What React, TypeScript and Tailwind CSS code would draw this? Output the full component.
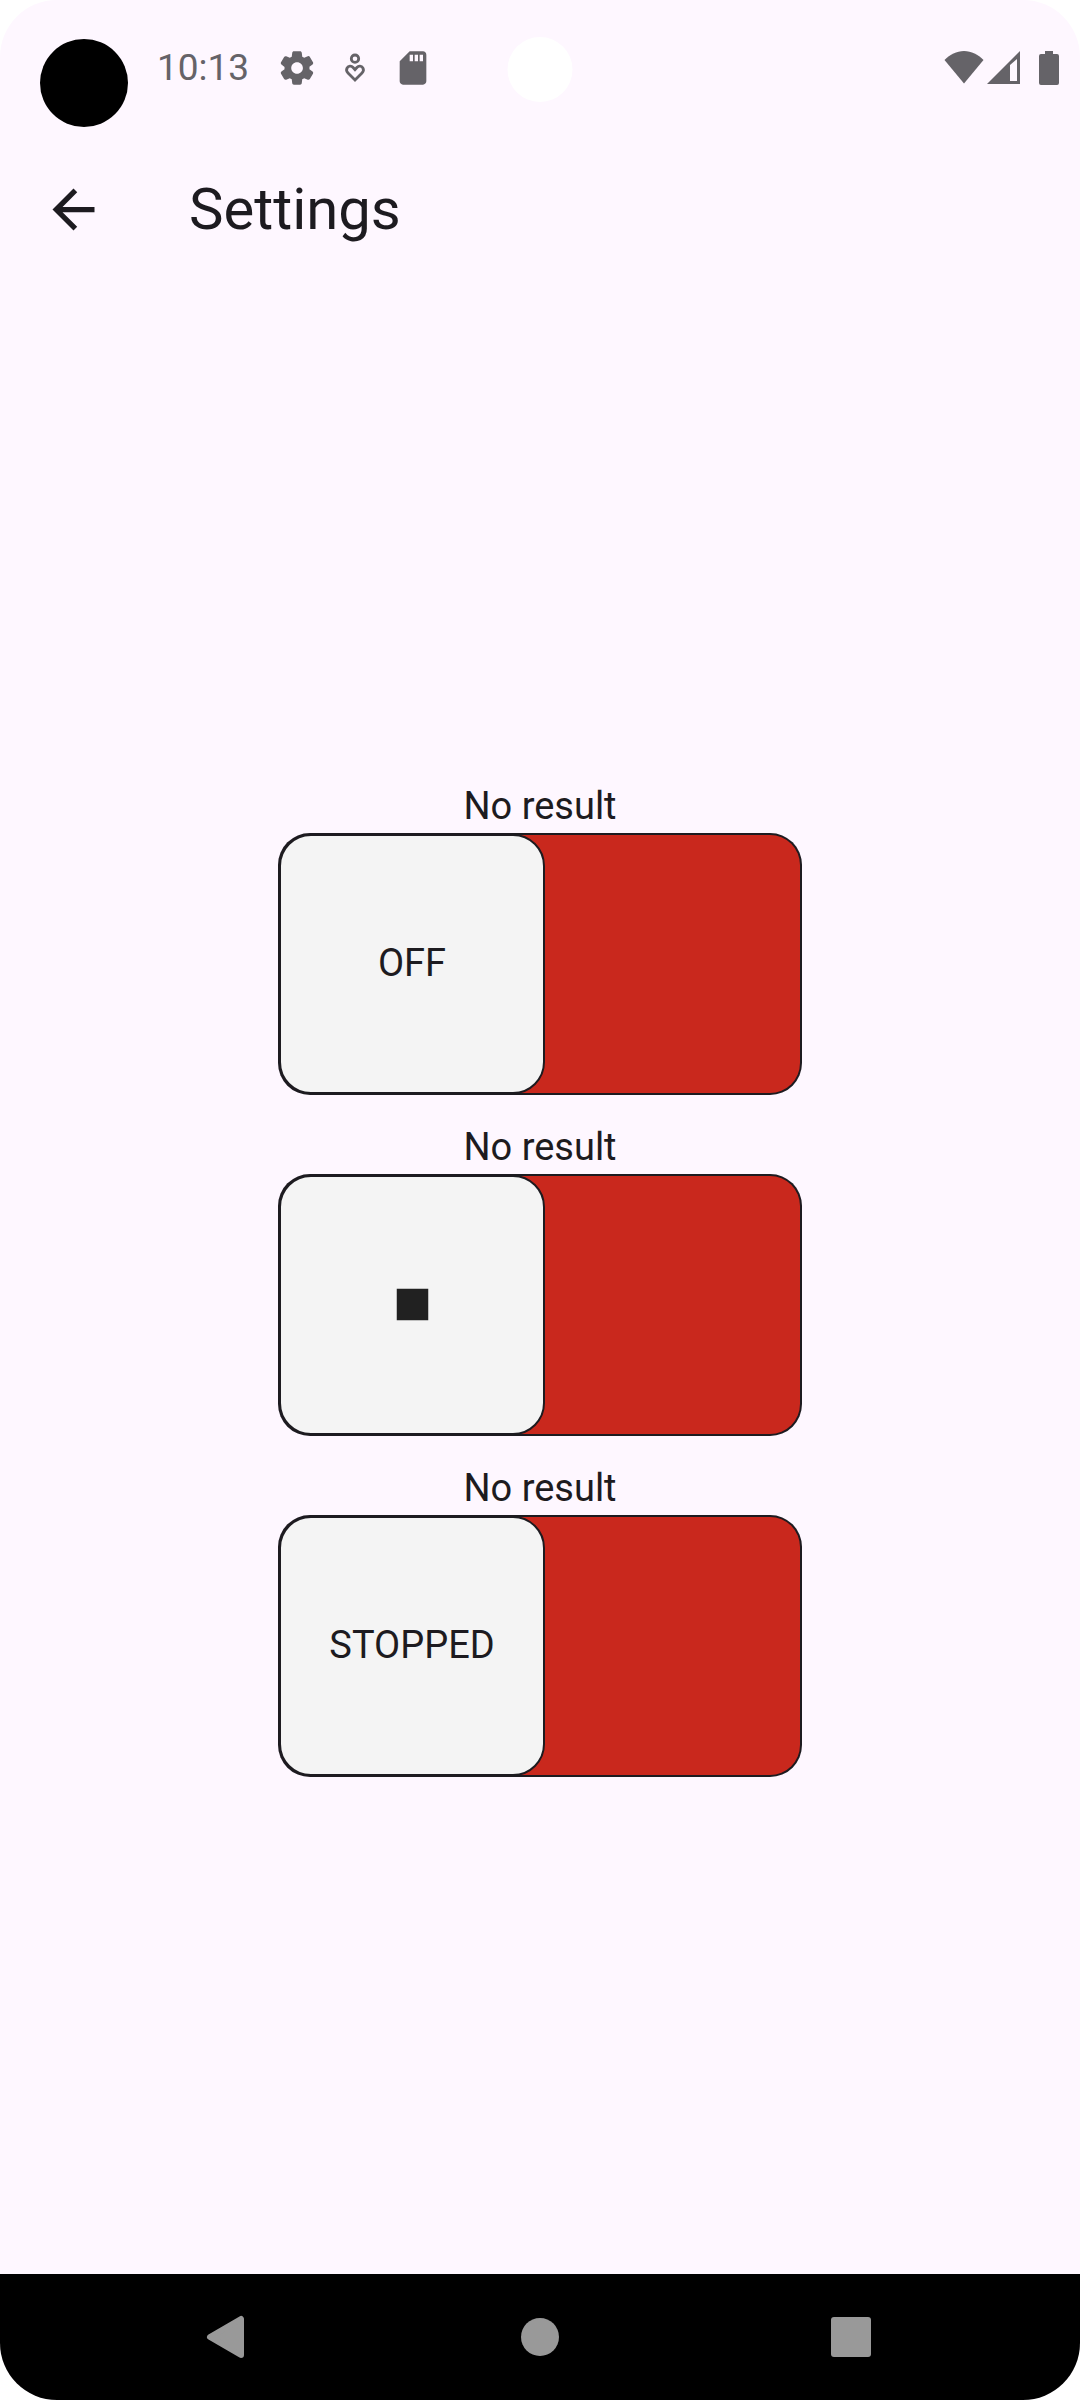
import { useId, type ReactNode } from "react";

function StatusBar() {
  return (
    <div className="relative flex h-[136px] shrink-0 items-center pr-[15px] pl-10 text-[#656368]">
      <span className="mt-[30px] size-[88px] rounded-full bg-black" />
      <span className="ml-[29px] text-[37px] leading-[44px]">10:13</span>
      <svg className="ml-[28px] size-10" viewBox="0 0 24 24" fill="currentColor" aria-hidden="true">
        <path d="M19.5 12c0-.23-.01-.45-.03-.68l1.86-1.41c.4-.3.51-.86.26-1.3l-1.87-3.23a.987.987 0 0 0-1.25-.42l-2.15.91c-.37-.26-.76-.49-1.17-.68l-.29-2.31c-.06-.5-.49-.88-.99-.88h-3.73c-.51 0-.94.38-1 .88l-.29 2.31c-.41.19-.8.42-1.17.68l-2.15-.91c-.46-.2-1-.02-1.25.42L2.41 8.62c-.25.44-.14.99.26 1.3l1.86 1.41a7.343 7.343 0 0 0 0 1.35l-1.86 1.41c-.4.3-.51.86-.26 1.3l1.87 3.23c.25.44.79.62 1.25.42l2.15-.91c.37.26.76.49 1.17.68l.29 2.31c.06.5.49.88.99.88h3.73c.5 0 .93-.38.99-.88l.29-2.31c.41-.19.8-.42 1.17-.68l2.15.91c.46.2 1 .02 1.25-.42l1.87-3.23c.25-.44.14-.99-.26-1.3l-1.86-1.41c.03-.23.04-.45.04-.68zm-7.46 3.5c-1.93 0-3.5-1.57-3.5-3.5s1.57-3.5 3.5-3.5 3.5 1.57 3.5 3.5-1.57 3.5-3.5 3.5z" />
      </svg>
      <svg className="ml-[18px] size-10" viewBox="0 0 40 40" fill="none" stroke="currentColor" strokeWidth="2.8" aria-hidden="true">
        <circle cx="20" cy="10.7" r="3.7" />
        <path d="M20 32l-7-7c-1.4-1.4-1.8-3.4-.9-5 1.3-2.2 4.3-2.4 6-.5l1.900 2.200 1.900-2.200c1.700-1.900 4.700-1.700 6 .5.900 1.600.500 3.600-.9 5z" />
      </svg>
      <svg className="ml-[18px] size-10" viewBox="0 0 24 24" fill="currentColor" aria-hidden="true">
        <path d="M18 2h-8L4.020 8 4 20c0 1.100.9 2 2 2h12c1.100 0 2-.9 2-2V4c0-1.100-.9-2-2-2zm-6 6h-2V4h2v4zm3 0h-2V4h2v4zm3 0h-2V4h2v4z" />
      </svg>
      <span className="absolute top-[37px] left-1/2 size-[65px] -translate-x-1/2 rounded-full bg-white" />
      <div className="ml-auto flex items-center">
        <svg className="h-10 w-[42px]" viewBox="0 0 42 40" fill="currentColor" aria-hidden="true">
          <path d="M21 35.500L1.500 12C7 6.500 13.500 3 21 3s14 3.500 19.500 9z" />
        </svg>
        <svg className="h-10 w-9" viewBox="0 0 36 40" fill="currentColor" fillRule="evenodd" aria-hidden="true">
          <path d="M35 3v33H2zM25 17v16h7V11z" />
        </svg>
        <svg className="ml-3 h-10 w-8" viewBox="0 0 32 40" fill="currentColor" aria-hidden="true">
          <path d="M12 3h8v3h4a2 2 0 0 1 2 2v27a2 2 0 0 1-2 2H8a2 2 0 0 1-2-2V8a2 2 0 0 1 2-2h4z" />
        </svg>
      </div>
    </div>
  );
}

function TopBar() {
  return (
    <header className="flex h-[146px] shrink-0 items-center pl-[42px]">
      <button type="button" aria-label="Back">
        <svg className="size-[63px]" viewBox="0 0 24 24" fill="currentColor" aria-hidden="true">
          <path d="M20 11H7.830l5.590-5.590L12 4l-8 8 8 8 1.410-1.410L7.830 13H20v-2z" />
        </svg>
      </button>
      <h1 className="ml-[84px] text-[58px] leading-[72px]">Settings</h1>
    </header>
  );
}

function SlideSwitch({ label, children }: { label: string; children: ReactNode }) {
  const id = useId();
  return (
    <div className="flex flex-col items-center">
      <span id={id} className="text-[38px] leading-[53px]">
        {label}
      </span>
      <label className="flex h-[262px] w-[524px] cursor-pointer rounded-[32px] bg-[#1d1b20] p-[2px]">
        <input type="checkbox" role="switch" aria-labelledby={id} className="peer sr-only" />
        <span className="flex flex-1 rounded-[30px] bg-[#c9281d] peer-checked:justify-end">
          <span className="-m-px flex w-[266px] items-center justify-center rounded-[32px] border-2 border-[#1d1b20] bg-[#f4f4f4] text-[38px] leading-[53px]">
            {children}
          </span>
        </span>
      </label>
    </div>
  );
}

function NavBar() {
  return (
    <nav className="flex h-[126px] shrink-0 items-center bg-black px-[73px] text-[#999999]">
      <button type="button" aria-label="Back" className="flex flex-1 justify-center">
        <svg className="size-14" viewBox="0 0 56 56" fill="currentColor" stroke="currentColor" strokeWidth="6" strokeLinejoin="round" aria-hidden="true">
          <path d="M9 28L40 10v36z" />
        </svg>
      </button>
      <button type="button" aria-label="Home" className="flex flex-1 justify-center">
        <svg className="size-14" viewBox="0 0 56 56" fill="currentColor" aria-hidden="true">
          <circle cx="28" cy="28" r="19" />
        </svg>
      </button>
      <button type="button" aria-label="Overview" className="flex flex-1 justify-center">
        <svg className="size-14" viewBox="0 0 56 56" fill="currentColor" aria-hidden="true">
          <rect x="8" y="8" width="40" height="40" rx="3" />
        </svg>
      </button>
    </nav>
  );
}

export default function App() {
  return (
    <div className="min-h-screen bg-white font-['Roboto',sans-serif] text-[#1d1b20]">
      <div className="flex min-h-screen flex-col overflow-hidden rounded-[57px] bg-[#fef7ff]">
        <StatusBar />
        <TopBar />
        <main className="flex flex-1 flex-col items-center justify-center gap-[26px]">
          <SlideSwitch label="No result">OFF</SlideSwitch>
          <SlideSwitch label="No result">
            <svg className="size-[63px]" viewBox="0 0 24 24" fill="#212121" aria-hidden="true">
              <path d="M6 6h12v12H6z" />
            </svg>
          </SlideSwitch>
          <SlideSwitch label="No result">STOPPED</SlideSwitch>
        </main>
        <NavBar />
      </div>
    </div>
  );
}
